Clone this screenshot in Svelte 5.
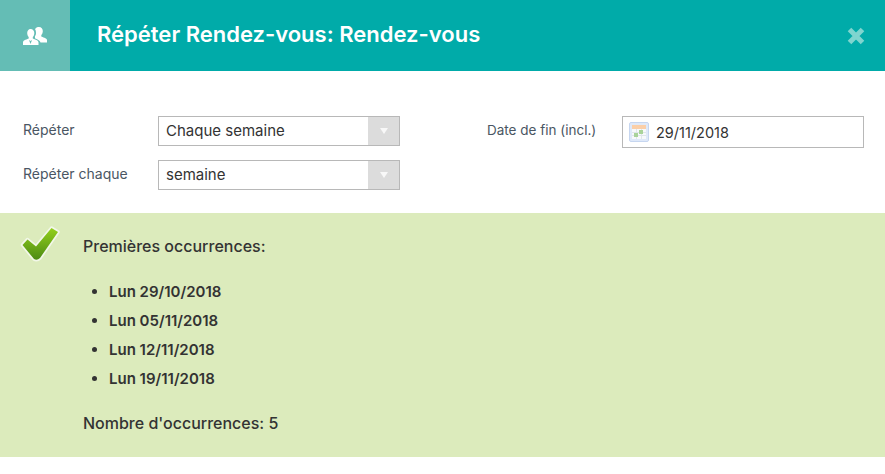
<script>
  const occurrences = ['Lun 29/10/2018', 'Lun 05/11/2018', 'Lun 12/11/2018', 'Lun 19/11/2018'];
</script>

<div class="dialog">
  <header class="header">
    <div class="header-icon">
      <svg width="26" height="20" viewBox="0 0 26 20">
        <path fill="#fff" d="M17 1c2.400 0 3.800 1.800 3.800 4 0 1.500-.5 3-1.500 4v1.500c1 .8 5.700 1.500 5.700 3.500v2.500h-6.500c-.5-2.500-3.500-3-5.500-4.300v-2.200c1-1.100 1-2.300 1-3.500 0-1.400-.3-2.500-.9-3.300C14 1.300 15.300 1 17 1z"/>
        <path fill="#fff" d="M8.500 3c2.400 0 3.800 1.800 3.800 4 0 1.500-.5 3-1.500 4v1.500c1 .8 5.700 1.500 5.700 3.700v2.800H1v-2.800c0-2.200 4.700-2.900 5.700-3.700V11c-1-1-1.500-2.500-1.500-4 0-2.200 1.400-4 3.300-4z"/>
        <path fill="#64bdb5" d="M8.500 18l-1.500-4 1.500 1 1.500-1z"/>
      </svg>
    </div>
    <h1 class="title">Répéter Rendez-vous: Rendez-vous</h1>
    <svg class="close" width="18" height="18" viewBox="0 0 18 18">
      <path stroke="#7fd5cf" stroke-width="5" d="M2.500 2.500l13 13M15.500 2.500l-13 13"/>
    </svg>
  </header>

  <section class="form">
    <div class="col">
      <div class="row">
        <span class="label">Répéter</span>
        <div class="select">
          <span class="value">Chaque semaine</span>
          <span class="arrow"><i></i></span>
        </div>
      </div>
      <div class="row">
        <span class="label">Répéter chaque</span>
        <div class="select">
          <span class="value">semaine</span>
          <span class="arrow"><i></i></span>
        </div>
      </div>
    </div>
    <div class="col right">
      <div class="row">
        <span class="label end">Date de fin (incl.)</span>
        <div class="date">
          <svg width="20" height="20" viewBox="0 0 20 20">
            <rect x="0.500" y="0.500" width="19" height="19" rx="1.500" fill="#dfe9f9" stroke="#c6d6f0"/>
            <rect x="3" y="3" width="14" height="4" fill="#fbcfa8"/>
            <rect x="3" y="7" width="14" height="10" fill="#f7f9fb"/>
            <path stroke="#dfe6ea" d="M3 10.500h14M3 13.500h14M7.500 7v10M12.500 7v10"/>
            <rect x="5" y="11" width="4" height="4" fill="#a9d39a"/>
            <rect x="10" y="8" width="4" height="4" fill="#a9d39a"/>
          </svg>
          <span class="value">29/11/2018</span>
        </div>
      </div>
    </div>
  </section>

  <section class="result">
    <svg class="check" width="42" height="42" viewBox="0 0 42 42">
      <defs>
        <linearGradient id="tick" gradientUnits="userSpaceOnUse" x1="0" y1="6" x2="0" y2="38">
          <stop offset="0" stop-color="#93d01c"/>
          <stop offset="1" stop-color="#4c8a14"/>
        </linearGradient>
      </defs>
      <path d="M3.500 23l5-5.500 8.500 7L32.500 6l6.500 4L21 36q-3 3-6 1z" fill="url(#tick)" stroke="#f2f7e8" stroke-width="3.500" stroke-linejoin="round" paint-order="stroke"/>
    </svg>
    <div class="result-body">
      <p class="heading">Premières occurrences:</p>
      <ul>
        {#each occurrences as item}
          <li>{item}</li>
        {/each}
      </ul>
      <p class="count">Nombre d'occurrences: 5</p>
    </div>
  </section>
</div>

<style>
  :global(body) {
    margin: 0;
    background: #fff;
  }

  .dialog {
    width: 885px;
    height: 457px;
    font-family: Inter, "Open Sans", sans-serif;
    color: #333;
  }

  .header {
    display: flex;
    align-items: center;
    height: 71px;
    background: #00aba9;
  }

  .header-icon {
    display: flex;
    align-items: center;
    justify-content: center;
    width: 70px;
    height: 100%;
    background: #64bdb5;
  }

  .title {
    flex: 1;
    margin: 0 0 3px 27px;
    font-size: 22px;
    font-weight: 600;
    color: #fff;
  }

  .close {
    margin-right: 20px;
  }

  .form {
    display: flex;
    height: 142px;
    box-sizing: border-box;
    padding: 45px 21px 0 23px;
  }

  .col {
    display: flex;
    flex-direction: column;
    gap: 14px;
    width: 377px;
  }

  .right {
    width: auto;
    margin-left: 87px;
  }

  .row {
    display: flex;
    align-items: center;
    height: 30px;
  }

  .label {
    width: 135px;
    margin-bottom: 3px;
    font-size: 14px;
    color: #4a5663;
  }

  .label.end {
    font-size: 13.500px;
  }

  .select {
    display: flex;
    width: 242px;
    height: 30px;
    box-sizing: border-box;
    border: 1px solid #b8b8b8;
  }

  .value {
    font-size: 14.500px;
    color: #333;
  }

  .select .value {
    flex: 1;
    padding-left: 7px;
    font-size: 15px;
    line-height: 27px;
  }

  .arrow {
    display: flex;
    align-items: center;
    justify-content: center;
    width: 31px;
    background: #dcdcdc;
  }

  .arrow i {
    width: 0;
    height: 0;
    border-left: 4px solid transparent;
    border-right: 4px solid transparent;
    border-top: 6px solid #f8f8f8;
  }

  .date {
    display: flex;
    align-items: center;
    gap: 7px;
    width: 242px;
    height: 32px;
    margin-top: 2px;
    box-sizing: border-box;
    padding-left: 6px;
    border: 1px solid #b8b8b8;
  }

  .result {
    display: flex;
    height: 244px;
    box-sizing: border-box;
    padding: 9px 0 0 19px;
    background: #dcebbc;
  }

  .check {
    flex: none;
  }

  .result-body {
    margin-left: 22px;
    font-size: 16px;
    font-weight: 500;
  }

  .heading {
    margin: 14px 0 0;
    line-height: 20px;
  }

  ul {
    margin: 26px 0 0;
    padding-left: 26px;
    font-size: 15px;
    font-weight: 600;
  }

  li {
    height: 29px;
    line-height: 20px;
  }

  .count {
    margin: 15px 0 0;
    line-height: 20px;
  }
</style>
